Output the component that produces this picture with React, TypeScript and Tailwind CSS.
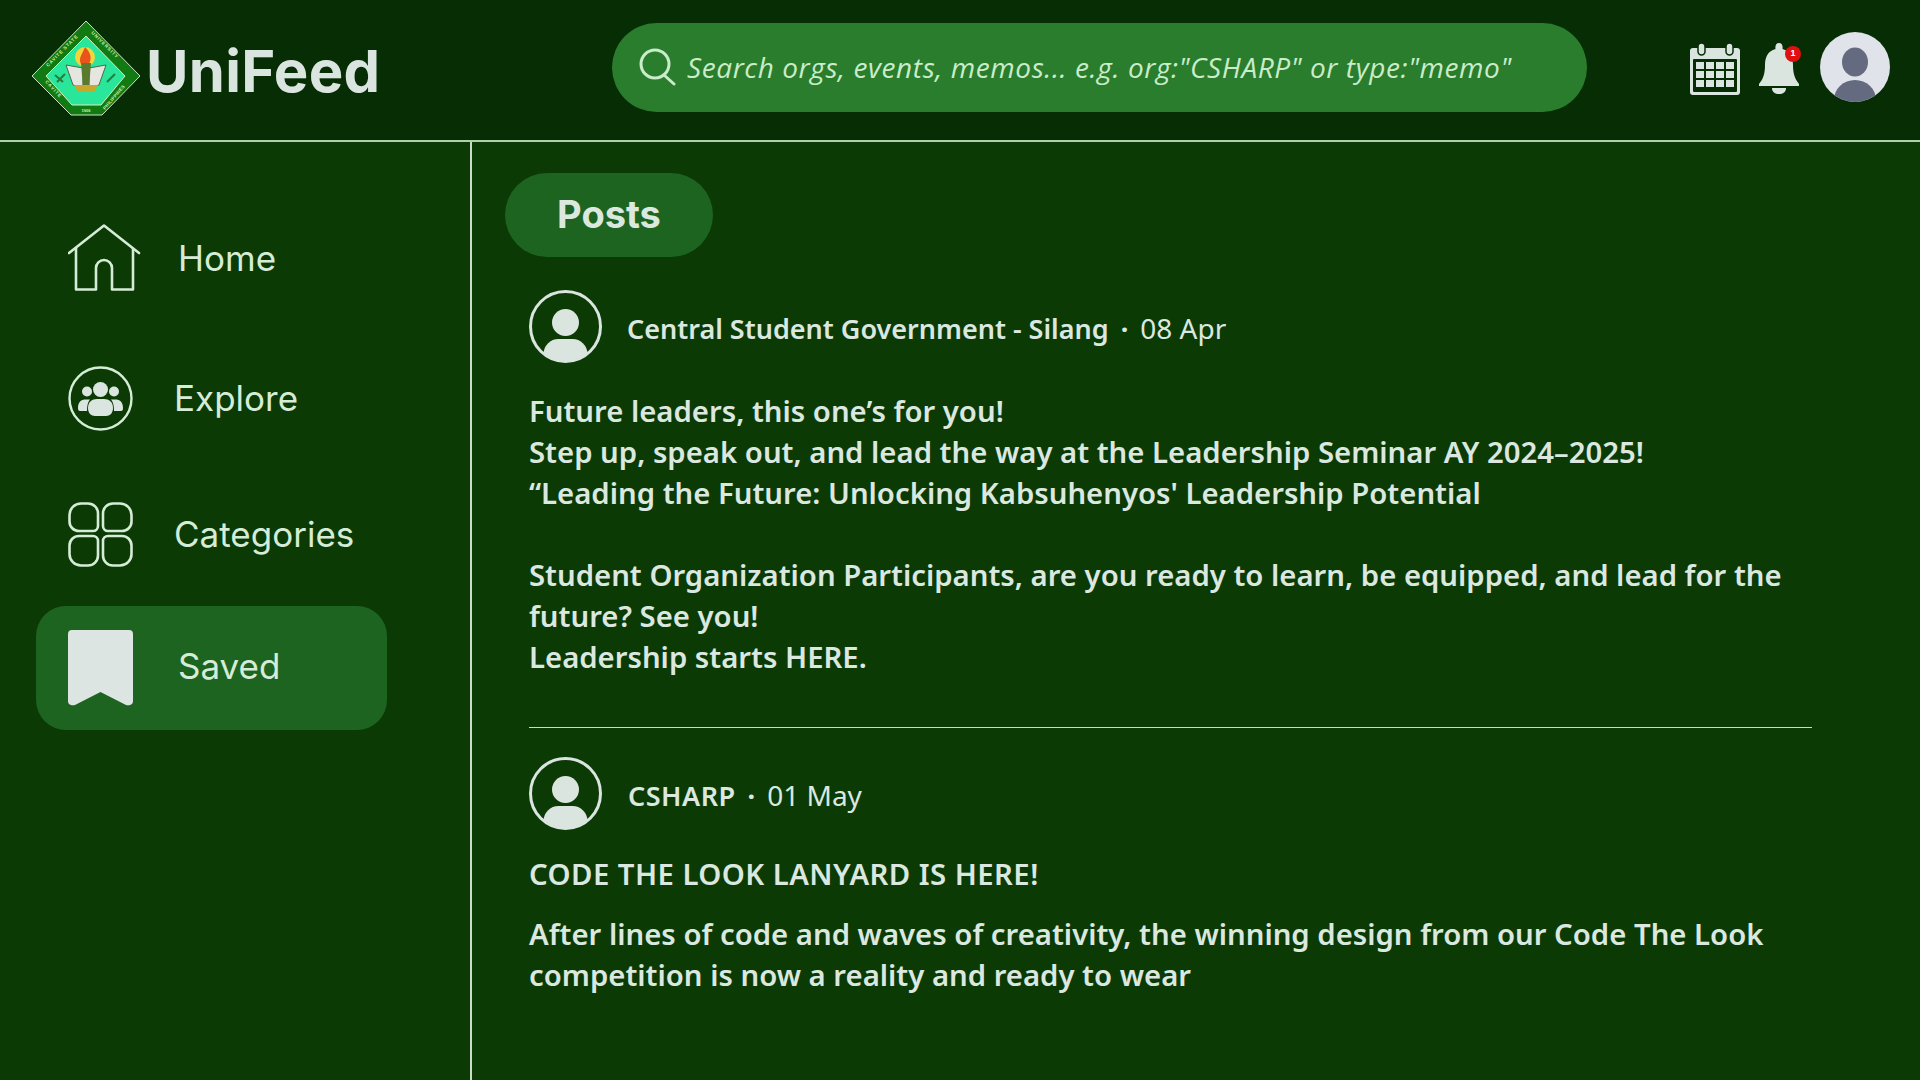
import React from 'react';

const Logo = () => (
  <svg width="110" height="98" viewBox="0 0 110 98" className="shrink-0">
    <path d="M55 1 L109 56 L71 95 L40 95 L1 56 Z" fill="#127a12" stroke="#cfe3c8" strokeWidth="1" />
    <path d="M55 16 L94 56 L70 85 L41 85 L15 56 Z" fill="#2ae69a" stroke="#d8f0c0" strokeWidth="1" />
    <defs>
      <path id="arcL" d="M17 47 L50 14" />
      <path id="arcR" d="M60 13 L97 50" />
      <path id="arcBL" d="M14 62 L36 86" />
      <path id="arcBR" d="M74 90 L98 62" />
    </defs>
    <g fontSize="4.6" fontWeight="700" fill="#d8f0a8" letterSpacing="0.9" fontFamily="Liberation Sans, sans-serif">
      <text>
        <textPath href="#arcL">CAVITE STATE</textPath>
      </text>
      <text>
        <textPath href="#arcR">UNIVERSITY</textPath>
      </text>
      <text>
        <textPath href="#arcBL">CAVITE</textPath>
      </text>
      <text letterSpacing="0.2">
        <textPath href="#arcBR">PHILIPPINES</textPath>
      </text>
      <text x="55" y="92" textAnchor="middle" fontSize="4" letterSpacing="0">1906</text>
    </g>
    <circle cx="54" cy="37" r="10" fill="#f5d33a" />
    <path d="M54 27 C60 33 61 38 58 44 L50 44 C47 38 51 35 54 27 Z" fill="#e8541c" />
    <path d="M35 45 L52 48 L52 68 L42 65 Z" fill="#e6e6e0" stroke="#4a6a4a" strokeWidth="1" />
    <path d="M75 45 L58 48 L58 68 L68 65 Z" fill="#e6e6e0" stroke="#4a6a4a" strokeWidth="1" />
    <path d="M50 43 L60 43 L58 68 L52 68 Z" fill="#5c7a2e" />
    <path d="M43 65 L67 65 L63 72 L47 72 Z" fill="#c8a82c" />
    <path d="M24 55 L32 62 M26 62 L34 54 M76 62 L84 54" stroke="#2b7a3e" strokeWidth="2" />
  </svg>
);

const CalendarIcon = () => (
  <svg width="52" height="54" viewBox="0 0 52 54" className="shrink-0">
    <path d="M4 6 H48 A3 3 0 0 1 51 9 V50 A3 3 0 0 1 48 53 H4 A3 3 0 0 1 1 50 V9 A3 3 0 0 1 4 6 Z" fill="#dbe5e0" />
    <rect x="9" y="1" width="7" height="12" rx="3.5" fill="#dbe5e0" stroke="#062d03" strokeWidth="1.5" />
    <rect x="37" y="1" width="7" height="12" rx="3.5" fill="#dbe5e0" stroke="#062d03" strokeWidth="1.5" />
    <rect x="4" y="17" width="44" height="33" rx="1" fill="#062d03" />
    {[20, 29, 38].map((y) =>
      [7, 17, 27, 37].map((x) => <rect key={`${x}-${y}`} x={x} y={y} width="8" height="7" fill="#dbe5e0" />),
    )}
  </svg>
);

const BellIcon = () => (
  <div className="relative w-[42px] h-[52px] shrink-0">
    <svg width="42" height="52" viewBox="0 0 42 52">
      <path d="M21 0 C24 0 25 3 24.5 6 C32 8 35 14 35 22 C35 31 37 36 41 41 L41 43 H1 L1 41 C5 36 7 31 7 22 C7 14 10 8 17.5 6 C17 3 18 0 21 0 Z" fill="#dbe5e0" />
      <path d="M14 45 H28 C28 49 25 51 21 51 C17 51 14 49 14 45 Z" fill="#dbe5e0" />
    </svg>
    <span className="absolute top-[3px] left-[27px] w-[16px] h-[16px] rounded-full bg-[#e01010] text-white text-[9px] font-bold flex items-center justify-center font-['Liberation_Sans',sans-serif]">
      1
    </span>
  </div>
);

const HeaderAvatar = () => (
  <svg width="70" height="70" viewBox="0 0 70 70" className="shrink-0">
    <defs>
      <clipPath id="hdrClip">
        <circle cx="35" cy="35" r="35" />
      </clipPath>
    </defs>
    <circle cx="35" cy="35" r="35" fill="#e0e3e9" />
    <ellipse cx="35" cy="30" rx="13" ry="14.5" fill="#646a80" />
    <ellipse cx="35" cy="68" rx="21" ry="20" fill="#646a80" clipPath="url(#hdrClip)" />
  </svg>
);

const PostAvatar = ({ id }: { id: string }) => (
  <svg width="73" height="73" viewBox="0 0 73 73" className="shrink-0">
    <defs>
      <clipPath id={id}>
        <circle cx="36.5" cy="36.5" r="34.5" />
      </clipPath>
    </defs>
    <circle cx="36.5" cy="36.5" r="35" fill="none" stroke="#dbe5e0" strokeWidth="3" />
    <circle cx="36.5" cy="32.5" r="13.5" fill="#dbe5e0" />
    <rect x="14.5" y="49" width="44" height="34" rx="15" fill="#dbe5e0" clipPath={`url(#${id})`} />
  </svg>
);

const HomeIcon = () => (
  <svg width="73" height="67" viewBox="0 0 73 67" fill="none" stroke="#d5ecd6" strokeWidth="2.6" className="shrink-0">
    <path d="M1 29 L36 1.5 L71 29" strokeLinecap="round" strokeLinejoin="round" />
    <path d="M8 24 V65.5 H28 V44 A8 8 0 0 1 44 44 V65.5 H65 V24" strokeLinejoin="round" />
  </svg>
);

const ExploreIcon = () => (
  <svg width="65" height="65" viewBox="0 0 65 65" className="shrink-0">
    <circle cx="32.5" cy="32.5" r="31" fill="none" stroke="#d5ecd6" strokeWidth="2.4" />
    <g fill="#dbe5e0">
      <circle cx="32.5" cy="23.5" r="7.5" />
      <circle cx="19" cy="25.5" r="5" />
      <circle cx="46" cy="25.5" r="5" />
      <path d="M10 42 C10 36 13 33.5 18 33.5 H22 C20 36 19 39 19 45 H12 C10.5 45 10 44 10 42 Z" />
      <path d="M55 42 C55 36 52 33.5 47 33.5 H43 C45 36 46 39 46 45 H53 C54.5 45 55 44 55 42 Z" />
      <path d="M20 42 C20 36 24 33 29 33 H36 C41 33 45 36 45 42 C45 47 42 50 38 50 H27 C23 50 20 47 20 42 Z" />
    </g>
  </svg>
);

const CategoriesIcon = () => (
  <svg width="65" height="65" viewBox="0 0 65 65" fill="none" stroke="#d5ecd6" strokeWidth="2.6" className="shrink-0">
    <path d="M13 1.5 H20 A10 10 0 0 1 30 11.5 V24 A5 5 0 0 1 25 29 H11 A9.5 9.5 0 0 1 1.5 19.5 V13 A11.5 11.5 0 0 1 13 1.5 Z" />
    <path d="M52 1.5 H45 A10 10 0 0 0 35 11.5 V24 A5 5 0 0 0 40 29 H54 A9.5 9.5 0 0 0 63.5 19.5 V13 A11.5 11.5 0 0 0 52 1.5 Z" />
    <path d="M13 63.5 H20 A10 10 0 0 0 30 53.5 V39 A5 5 0 0 0 25 34 H11 A9.5 9.5 0 0 0 1.5 43.5 V52 A11.5 11.5 0 0 0 13 63.5 Z" />
    <path d="M52 63.5 H45 A10 10 0 0 1 35 53.5 V39 A5 5 0 0 1 40 34 H54 A9.5 9.5 0 0 1 63.5 43.5 V52 A11.5 11.5 0 0 1 52 63.5 Z" />
  </svg>
);

const BookmarkIcon = () => (
  <svg width="65" height="76" viewBox="0 0 65 76" className="shrink-0">
    <path d="M4 0 H61 A4 4 0 0 1 65 4 V71 C65 75 61 76 58 75 L32.5 62 L7 75 C4 76 0 75 0 71 V4 A4 4 0 0 1 4 0 Z" fill="#dde5e3" />
  </svg>
);

const SearchIcon = () => (
  <svg width="37" height="38" viewBox="0 0 37 38" fill="none" stroke="#c9ecc9" strokeWidth="3" strokeLinecap="round" className="shrink-0">
    <circle cx="16" cy="16" r="14" />
    <path d="M25 27 L35 36" />
  </svg>
);

const navItems = [
  { label: 'Home', icon: <HomeIcon />, cls: 'h-[130px] gap-[37px]', textCls: 'mt-[2px]' },
  { label: 'Explore', icon: <ExploreIcon />, cls: 'h-[152px] gap-[41px]', textCls: '' },
  { label: 'Categories', icon: <CategoriesIcon />, cls: 'h-[120px] gap-[41px]', textCls: '' },
];

const Sidebar = () => (
  <aside className="w-[472px] shrink-0 border-r-2 border-[#c9dcc9] pt-[50px] pl-[36px]">
    <nav className="flex flex-col w-[351px]">
      {navItems.map((item) => (
        <div key={item.label} className={`flex items-center pl-[32px] ${item.cls}`}>
          {item.icon}
          <span className={`text-[35px] text-[#d5ecd6] ${item.textCls}`}>{item.label}</span>
        </div>
      ))}
      <div className="flex items-center pl-[32px] gap-[45px] h-[124px] mt-[12px] rounded-[30px] bg-[#1d6420]">
        <BookmarkIcon />
        <span className="text-[35px] text-[#d5ecd6] mb-[3px]">Saved</span>
      </div>
    </nav>
  </aside>
);

const PostHeader = ({ id, org, date, gap, orgCls }: { id: string; org: string; date: string; gap: string; orgCls?: string }) => (
  <div className={`flex items-center ${gap}`}>
    <PostAvatar id={id} />
    <div className="flex items-baseline text-[27px] pt-[3px]">
      <span className={`font-semibold ${orgCls ?? ''}`}>{org}</span>
      <span className="mx-[12px] font-bold">·</span>
      <span className="font-normal text-[28px]">{date}</span>
    </div>
  </div>
);

export default function App() {
  return (
    <div className="w-[1920px] h-[1080px] overflow-hidden flex flex-col bg-[#0b3a05] text-[#dbe8e0] font-['Inter',sans-serif]">
      <header className="h-[142px] shrink-0 flex items-center bg-[#062d03] border-b-2 border-[#b0d0ac] pl-[31px] pr-[30px] pb-[2px]">
        <div className="flex items-center gap-[5px] w-[581px]">
          <Logo />
          <span className="text-[58px] tracking-[0.3px] font-bold mt-[4px] text-[#dbe5e0]">UniFeed</span>
        </div>
        <div className="w-[975px] h-[89px] mt-[-4px] rounded-full bg-[#2a7d2d] flex items-center pl-[27px] gap-[11px]">
          <SearchIcon />
          <span className="text-[28px] tracking-[0.6px] italic text-[#c9ecc9] font-['Open_Sans',sans-serif]">
            Search orgs, events, memos... e.g. org:"CSHARP" or type:"memo"
          </span>
        </div>
        <div className="ml-auto flex items-center">
          <CalendarIcon />
          <div className="ml-[17px]">
            <BellIcon />
          </div>
          <div className="ml-[20px] mt-[-4px]">
            <HeaderAvatar />
          </div>
        </div>
      </header>

      <div className="flex flex-1 min-h-0">
        <Sidebar />
        <main className="flex-1 min-w-0 pl-[33px] pt-[31px] font-['Noto_Sans',sans-serif]">
          <div className="w-[208px] h-[84px] rounded-full bg-[#1d6420] flex items-center justify-center pb-[2px] text-[38px] font-bold font-['Inter',sans-serif]">
            Posts
          </div>
          <div className="ml-[24px] w-[1283px] mt-[33px]">
            <PostHeader id="postClipA" org="Central Student Government - Silang" date="08 Apr" gap="gap-[25px]" />
            <div className="mt-[28px] text-[29.3px] leading-[41px] font-semibold">
              <p>Future leaders, this one’s for you!</p>
              <p>Step up, speak out, and lead the way at the Leadership Seminar AY 2024–2025!</p>
              <p>“Leading the Future: Unlocking Kabsuhenyos' Leadership Potential</p>
              <p className="mt-[41px]">Student Organization Participants, are you ready to learn, be equipped, and lead for the future? See you!</p>
              <p>Leadership starts HERE.</p>
            </div>
            <div className="mt-[49px] border-t border-[#c9dcc9]" />
            <div className="mt-[29px]">
              <PostHeader id="postClipB" org="CSHARP" date="01 May" gap="gap-[26px]" orgCls="tracking-[0.5px]" />
            </div>
            <p className="mt-[24px] text-[29.3px] tracking-[0.45px] leading-[41px] font-semibold">CODE THE LOOK LANYARD IS HERE!</p>
            <p className="mt-[19px] text-[29.3px] leading-[41px] font-semibold">
              After lines of code and waves of creativity, the winning design from our Code The Look competition is now a reality and ready to wear
            </p>
          </div>
        </main>
      </div>
    </div>
  );
}
